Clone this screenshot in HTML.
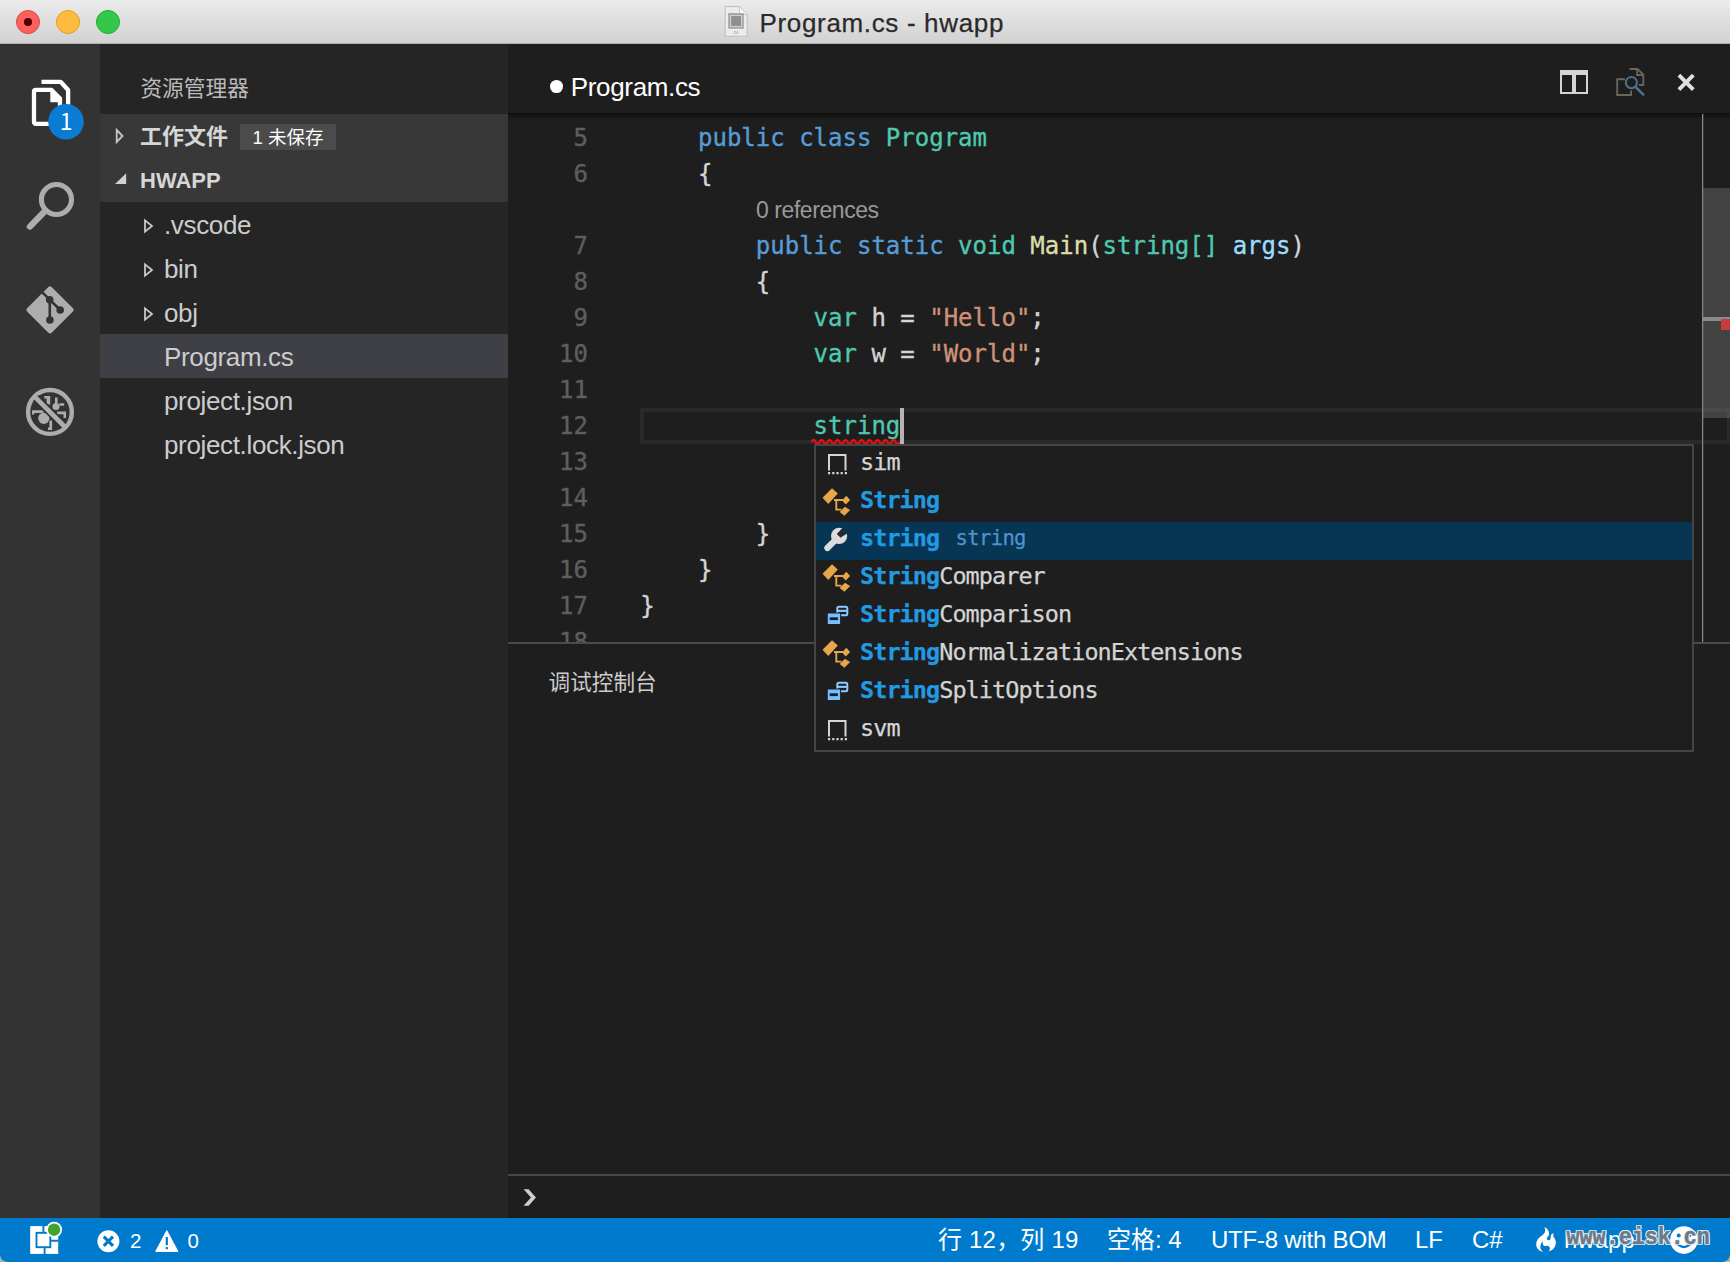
<!DOCTYPE html>
<html lang="zh-CN">
<head>
<meta charset="utf-8">
<title>Program.cs - hwapp</title>
<style>
*{box-sizing:border-box;margin:0;padding:0}
html,body{width:1730px;height:1262px;overflow:hidden;background:#1e1e1e}
body{position:relative;font-family:"Liberation Sans","Noto Sans CJK SC",sans-serif;color:#ccc}
.abs{position:absolute}
#titlebar{left:0;top:0;width:1730px;height:44px;background:linear-gradient(#ececec,#e4e3e4 30%,#d3d2d3);border-bottom:1px solid #b1b0b1}
.tl{position:absolute;top:10px;width:24px;height:24px;border-radius:50%}
#title{left:759.5px;top:1px;height:44px;line-height:45px;font-size:26px;color:#2a2a2a;white-space:nowrap;letter-spacing:0.66px;-webkit-text-stroke:0.25px}
#activity{left:0;top:44px;width:100px;height:1174px;background:#333333}
#sidebar{left:100px;top:44px;width:408px;height:1174px;background:#252526}
#editor{left:508px;top:44px;width:1222px;height:1174px;background:#1e1e1e}
#status{left:0;top:1218px;width:1730px;height:44px;background:#007acc;color:#fff;font-size:24px}
.sbtitle{left:140.4px;top:71.5px;font-size:21.7px;line-height:34px;color:#bbbbbb;white-space:nowrap}
.sechdr{left:100px;width:408px;height:44px;background:#383838}
.sectxt{font-size:22px;font-weight:bold;color:#d6d6d6;line-height:44px;white-space:nowrap}
.row{left:100px;width:408px;height:44px;line-height:46px;font-size:26px;color:#cccccc;white-space:nowrap;letter-spacing:-0.35px}
.row span{position:absolute;left:64px}
.code{font-family:"DejaVu Sans Mono","Liberation Mono",monospace;font-size:24px;white-space:pre;color:#d4d4d4;-webkit-text-stroke:0.35px}
.ln{left:508px;width:80px;text-align:right;height:36px;line-height:38px;color:#5e5e5e}
.cl{left:641px;height:36px;line-height:38px}
.k{color:#569cd6}.t{color:#4ec9b0}.s{color:#ce9178}.f{color:#dcdcaa}.v{color:#9cdcfe}
.sg{left:816px;width:876px;height:38px;line-height:32.6px;font-family:"DejaVu Sans Mono","Liberation Mono",monospace;font-size:23.5px;letter-spacing:-0.95px;white-space:pre;color:#d4d4d4;-webkit-text-stroke:0.25px}
.sg b{color:#219ae4;font-weight:bold}
.sg span.lbl{position:absolute;left:44px;top:0}
.st{top:0;height:44px;line-height:44px;white-space:nowrap}
</style>
</head>
<body>
<!-- title bar -->
<div id="titlebar" class="abs">
  <div class="tl" style="left:16px;background:#fc615d;border:1px solid #e2463f"></div>
  <div class="abs" style="left:24px;top:18px;width:8px;height:8px;border-radius:50%;background:#4d0000"></div>
  <div class="tl" style="left:56px;background:#fdbc40;border:1px solid #dfa023"></div>
  <div class="tl" style="left:96px;background:#34c84a;border:1px solid #1dad2c"></div>
</div>
<svg class="abs" style="left:720px;top:2px" width="32" height="40" viewBox="720 2 32 40">
  <path d="M725.2 6.6H739.5L747.2 14.6V36.2H725.2Z" fill="#ececec" stroke="#bdbdbd" stroke-width="1"/>
  <path d="M739.5 6.6V14.6H747.2Z" fill="#f8f8f8" stroke="#c4c4c4" stroke-width=".8"/>
  <rect x="728.2" y="13.1" width="15.6" height="15.6" fill="#a3a3a3"/>
  <rect x="730.6" y="15.6" width="11" height="10.8" fill="#8f8f8f" stroke="#d6d6d6" stroke-width="1"/>
  <text x="736" y="33.6" text-anchor="middle" style="font-family:'Liberation Sans',sans-serif;font-size:3.6px;font-weight:bold" fill="#9a9a9a">C#</text>
</svg>
<div id="title" class="abs">Program.cs - hwapp</div>

<div id="activity" class="abs"></div>
<div id="sidebar" class="abs"></div>
<div id="editor" class="abs"></div>

<!-- activity bar icons (page coords) -->
<svg class="abs" style="left:0;top:44px" width="100" height="420" viewBox="0 44 100 420">
  <!-- explorer -->
  <g fill="none" stroke="#ffffff" stroke-width="4.3" stroke-linejoin="round">
    <path d="M41.5 81.8H60.6L68.1 90V110"/>
    <path d="M51.5 89.9H36Q34 89.9 34 91.9V121.8Q34 123.8 36 123.8H58Q60 123.8 60 121.8V98.5Z"/>
  </g>
  <path d="M50.3 89.9H53L60.5 97.5V102.3H50.3Z" fill="#ffffff"/>
  <circle cx="66" cy="121.7" r="17.8" fill="#0a7cd4"/>
  <text x="66.2" y="129.8" style="font-family:'Noto Sans CJK SC','Liberation Sans',sans-serif;font-size:23px" fill="#ffffff" text-anchor="middle">1</text>
  <!-- search -->
  <circle cx="56.45" cy="199.5" r="15.05" fill="none" stroke="#adadad" stroke-width="5.1"/>
  <path d="M45.3 210.7L29.9 226.6" stroke="#adadad" stroke-width="6.3" stroke-linecap="round"/>
  <!-- git -->
  <path d="M48.1 287.2Q50 285.3 51.9 287.2L72.7 308Q74.6 309.9 72.7 311.8L51.9 332.6Q50 334.5 48.1 332.6L27.3 311.8Q25.4 309.9 27.3 308Z" fill="#adadad"/>
  <g stroke="#333333" stroke-width="2.6" fill="#333333">
    <path d="M41.8 291.8L49.7 299.7L60.2 310M49.8 299.7V320" fill="none"/>
    <circle cx="49.7" cy="299.8" r="2.5"/><circle cx="60.2" cy="310" r="2.5"/><circle cx="49.9" cy="320" r="2.5"/>
  </g>
  <!-- debug (disabled bug) -->
  <defs><clipPath id="dbgclip"><circle cx="49.95" cy="411.95" r="20"/></clipPath></defs>
  <circle cx="49.95" cy="411.95" r="21.9" fill="none" stroke="#adadad" stroke-width="4.4"/>
  <g clip-path="url(#dbgclip)">
  <g fill="#adadad">
    <circle cx="43.8" cy="418.3" r="5.6"/>
    <circle cx="56" cy="406.4" r="3.5"/>
    <path d="M32 410.2H43.4V412.9H34.3V414.4H32Z"/>
    <path d="M49.4 420.5H52.1V430H48V427.6H49.4Z"/>
    <path d="M44.2 396H50.2V404.5H46.6V398.4H44.2Z"/>
    <path d="M55 397.6H57.6V403.5H55Z"/>
    <path d="M59.3 403.3H64.2V405.8H59.3Z"/>
    <path d="M57 411.6H66V418H63.5V414.2H57Z"/>
  </g>
  <path d="M30 392L70 432" stroke="#333333" stroke-width="8.2"/>
  </g>
  <path d="M34.4 396.4L65.5 427.5" stroke="#adadad" stroke-width="4.6"/>
</svg>

<!-- sidebar content -->
<div class="abs sbtitle">资源管理器</div>
<div class="abs sechdr" style="top:114px;height:88px"></div>
<div class="abs sectxt" style="left:140px;top:115px">工作文件</div>
<div class="abs" style="left:240px;top:124px;width:96px;height:26px;background:#4b4b4b;color:#fff;font-size:18.5px;line-height:28px;text-align:center;white-space:nowrap">1 未保存</div>
<div class="abs sectxt" style="left:140px;top:158.5px">HWAPP</div>

<!-- tree twisties -->
<svg class="abs" style="left:100px;top:114px" width="70" height="230" viewBox="100 114 70 230" fill="none" stroke="#c8c8c8" stroke-width="1.8" stroke-linejoin="miter">
  <path d="M116.7 130L122.5 136L116.7 142Z"/>
  <path d="M126.2 173.2V184.1H115Z" fill="#d0d0d0" stroke="none"/>
  <path d="M145 220.4L152 226L145 231.6Z"/>
  <path d="M145 264.4L152 270L145 275.6Z"/>
  <path d="M145 308.4L152 314L145 319.6Z"/>
</svg>
<div class="abs row" style="top:202px"><span>.vscode</span></div>
<div class="abs row" style="top:246px"><span>bin</span></div>
<div class="abs row" style="top:290px"><span>obj</span></div>
<div class="abs row" style="top:334px;background:#3f3f46"><span>Program.cs</span></div>
<div class="abs row" style="top:378px"><span>project.json</span></div>
<div class="abs row" style="top:422px"><span>project.lock.json</span></div>

<!-- editor header -->
<div class="abs" style="left:549.8px;top:80.4px;width:12.8px;height:12.8px;border-radius:50%;background:#ffffff"></div>
<div class="abs" style="left:570.8px;top:65px;font-size:26px;line-height:44px;color:#fff;white-space:nowrap;letter-spacing:-0.35px">Program.cs</div>

<!-- editor body -->
<div class="abs" style="left:508px;top:114px;width:1222px;height:528px;overflow:hidden" id="edbody">
<div class="abs" style="left:132px;top:294px;width:1090px;height:36px;border:4px solid #2a2a2a;border-right-width:3px"></div>
<div class="abs code ln" style="left:0;top:5px">5</div>
<div class="abs code cl" style="left:132.2px;top:5px">    <span class="k">public</span> <span class="k">class</span> <span class="t">Program</span></div>
<div class="abs code ln" style="left:0;top:41px">6</div>
<div class="abs code cl" style="left:132.2px;top:41px">    {</div>
<div class="abs" style="left:248px;top:77px;height:36px;line-height:39px;font-size:23px;color:#999999;white-space:nowrap;letter-spacing:-0.43px">0 references</div>
<div class="abs code ln" style="left:0;top:113px">7</div>
<div class="abs code cl" style="left:132.2px;top:113px">        <span class="k">public</span> <span class="k">static</span> <span class="t">void</span> <span class="f">Main</span>(<span class="t">string</span><span class="t">[]</span> <span class="v">args</span>)</div>
<div class="abs code ln" style="left:0;top:149px">8</div>
<div class="abs code cl" style="left:132.2px;top:149px">        {</div>
<div class="abs code ln" style="left:0;top:185px">9</div>
<div class="abs code cl" style="left:132.2px;top:185px">            <span class="t">var</span> h = <span class="s">"Hello"</span>;</div>
<div class="abs code ln" style="left:0;top:221px">10</div>
<div class="abs code cl" style="left:132.2px;top:221px">            <span class="t">var</span> w = <span class="s">"World"</span>;</div>
<div class="abs code ln" style="left:0;top:257px">11</div>
<div class="abs code ln" style="left:0;top:293px">12</div>
<div class="abs code cl" style="left:132.2px;top:293px">            <span class="t">string</span></div>
<div class="abs code ln" style="left:0;top:329px">13</div>
<div class="abs code ln" style="left:0;top:365px">14</div>
<div class="abs code ln" style="left:0;top:401px">15</div>
<div class="abs code cl" style="left:132.2px;top:401px">        }</div>
<div class="abs code ln" style="left:0;top:437px">16</div>
<div class="abs code cl" style="left:132.2px;top:437px">    }</div>
<div class="abs code ln" style="left:0;top:473px">17</div>
<div class="abs code cl" style="left:132.2px;top:473px">}</div>
<div class="abs code ln" style="left:0;top:509px">18</div>
<!-- cursor + squiggle (inside edbody coords) -->
<svg class="abs" style="left:300px;top:321px" width="100" height="12" viewBox="0 0 100 12"><path d="M3.6 7q2 -4.2 4 0 t4 0 t4 0 t4 0 t4 0 t4 0 t4 0 t4 0 t4 0 t4 0 t4 0 t4 0 t4 0 t4 0 t4 0 t4 0 t4 0 t4 0 t4 0 t4 0 t4 0 t4 0" fill="none" stroke="#f00c0c" stroke-width="2.3"/></svg>
<div class="abs" style="left:392px;top:294px;width:4px;height:36px;background:#b4b4b4"></div>
</div>

<!-- editor chrome: header shadow, ruler, scrollbar -->
<div class="abs" style="left:508px;top:113px;width:1222px;height:7px;background:linear-gradient(rgba(0,0,0,.5),rgba(0,0,0,0))"></div>
<div class="abs" style="left:1702px;top:114px;width:1px;height:528px;background:#858585"></div>
<div class="abs" style="left:1703px;top:114px;width:1px;height:528px;background:#3a3a3a"></div>
<div class="abs" style="left:1703px;top:188px;width:27px;height:230px;background:rgba(121,121,121,.4)"></div>
<div class="abs" style="left:1703px;top:317px;width:27px;height:4px;background:#8a8a8a"></div>
<div class="abs" style="left:1721px;top:319px;width:9px;height:11px;background:#c93a3a"></div>

<!-- panel -->
<div class="abs" style="left:508px;top:642px;width:1222px;height:576px;background:#1e1e1e;border-top:2px solid #4b4b4b"></div>
<div class="abs" style="left:548.6px;top:665px;font-size:21.6px;line-height:36px;color:#cccccc;white-space:nowrap">调试控制台</div>
<div class="abs" style="left:508px;top:1174px;width:1222px;height:2px;background:#484848"></div>
<svg class="abs" style="left:520px;top:1186px" width="20" height="24" viewBox="0 0 20 24"><path d="M3.6 3.2H8.6L16 11.4L8.6 19.8H3.6L11 11.4Z" fill="#d0d0d0"/></svg>

<!-- suggest widget -->
<div class="abs" style="left:814px;top:444px;width:880px;height:308px;background:#1e1e1e;border:2px solid #454545"></div>
<div class="abs sg" style="top:446px"><svg class="abs" style="left:0;top:0" width="44" height="38" viewBox="0 0 44 38"><path d="M13 24.5V9H29.5V24.5" fill="none" stroke="#d4d4d4" stroke-width="2"/><path d="M12 27.2H31" fill="none" stroke="#d4d4d4" stroke-width="2.2" stroke-dasharray="2.2 2"/></svg><span class="lbl">sim</span></div>
<div class="abs sg" style="top:484px"><svg class="abs" style="left:0;top:0" width="44" height="38" viewBox="0 0 44 38"><g fill="#e8a64a"><path d="M16 4.2L21.8 9.4L12.3 19.9L6.5 13.7Z"/><path d="M30.3 11.8L34.1 16.1L29.8 20.4L26 16.5Z"/><path d="M28.9 22.7L34.1 26L28.4 31.8L23.7 28Z"/></g><path d="M18 16H27M20.3 16V25.6H25.5" fill="none" stroke="#e8a64a" stroke-width="1.9"/></svg><span class="lbl"><b>String</b></span></div>
<div class="abs sg" style="top:522px;background:#073655"><svg class="abs" style="left:0;top:0" width="44" height="38" viewBox="0 0 44 38"><path d="M11.4 26L19.5 17.9" stroke="#dcdcdc" stroke-width="6.2" stroke-linecap="round" fill="none"/><circle cx="23.1" cy="13.9" r="8.1" fill="#dcdcdc"/><path d="M21 12L26.6 6L33 8L31.5 11.2L24.6 15.6Z" fill="#073655"/><path d="M21 12L26 6.7L30.3 10.2L24.6 15.6Z" fill="#2b2b2e"/></svg><span class="lbl"><b>string</b><span style="font-size:20.5px;letter-spacing:-0.64px;font-weight:normal;color:#5193cc;position:absolute;left:95.6px;top:0">string</span></span></div>
<div class="abs sg" style="top:560px"><svg class="abs" style="left:0;top:0" width="44" height="38" viewBox="0 0 44 38"><g fill="#e8a64a"><path d="M16 4.2L21.8 9.4L12.3 19.9L6.5 13.7Z"/><path d="M30.3 11.8L34.1 16.1L29.8 20.4L26 16.5Z"/><path d="M28.9 22.7L34.1 26L28.4 31.8L23.7 28Z"/></g><path d="M18 16H27M20.3 16V25.6H25.5" fill="none" stroke="#e8a64a" stroke-width="1.9"/></svg><span class="lbl"><b>String</b>Comparer</span></div>
<div class="abs sg" style="top:598px"><svg class="abs" style="left:0;top:0" width="44" height="38" viewBox="0 0 44 38"><rect x="21.3" y="8.7" width="10" height="8.5" fill="none" stroke="#8ecaff" stroke-width="2" rx="1.5"/><rect x="22" y="11.8" width="8.6" height="2.1" fill="#8ecaff"/><rect x="10.8" y="14.5" width="14.3" height="12.5" fill="#1e1e1e"/><rect x="11.8" y="15.5" width="12.3" height="10.5" fill="#75beff"/><rect x="13.7" y="19.3" width="8.2" height="2.8" fill="#10202f"/></svg><span class="lbl"><b>String</b>Comparison</span></div>
<div class="abs sg" style="top:636px"><svg class="abs" style="left:0;top:0" width="44" height="38" viewBox="0 0 44 38"><g fill="#e8a64a"><path d="M16 4.2L21.8 9.4L12.3 19.9L6.5 13.7Z"/><path d="M30.3 11.8L34.1 16.1L29.8 20.4L26 16.5Z"/><path d="M28.9 22.7L34.1 26L28.4 31.8L23.7 28Z"/></g><path d="M18 16H27M20.3 16V25.6H25.5" fill="none" stroke="#e8a64a" stroke-width="1.9"/></svg><span class="lbl"><b>String</b>NormalizationExtensions</span></div>
<div class="abs sg" style="top:674px"><svg class="abs" style="left:0;top:0" width="44" height="38" viewBox="0 0 44 38"><rect x="21.3" y="8.7" width="10" height="8.5" fill="none" stroke="#8ecaff" stroke-width="2" rx="1.5"/><rect x="22" y="11.8" width="8.6" height="2.1" fill="#8ecaff"/><rect x="10.8" y="14.5" width="14.3" height="12.5" fill="#1e1e1e"/><rect x="11.8" y="15.5" width="12.3" height="10.5" fill="#75beff"/><rect x="13.7" y="19.3" width="8.2" height="2.8" fill="#10202f"/></svg><span class="lbl"><b>String</b>SplitOptions</span></div>
<div class="abs sg" style="top:712px"><svg class="abs" style="left:0;top:0" width="44" height="38" viewBox="0 0 44 38"><path d="M13 24.5V9H29.5V24.5" fill="none" stroke="#d4d4d4" stroke-width="2"/><path d="M12 27.2H31" fill="none" stroke="#d4d4d4" stroke-width="2.2" stroke-dasharray="2.2 2"/></svg><span class="lbl">svm</span></div>

<!-- editor header actions -->
<svg class="abs" style="left:1550px;top:60px" width="160" height="44" viewBox="1550 60 160 44">
  <path d="M1560 70H1588V94H1560ZM1562 75V92H1572V75ZM1576 75V92H1586V75Z" fill="#d4d4d4" fill-rule="evenodd"/>
  <g fill="none" stroke="#6a655f" stroke-width="1.9">
    <path d="M1629.5 69H1637.6L1643.3 74.7V85H1639"/>
    <path d="M1637.2 69.2V75H1643"/>
    <path d="M1625 79.2H1617.2V95H1631V90.5"/>
  </g>
  <circle cx="1631.4" cy="82.6" r="5.6" fill="none" stroke="#4d708f" stroke-width="2"/>
  <path d="M1635.4 86.8L1643.3 94.6" stroke="#4d708f" stroke-width="2.6" stroke-linecap="round"/>
  <path d="M1678.9 75.2L1693.3 89.6M1693.3 75.2L1678.9 89.6" stroke="#e0e0e0" stroke-width="3.9"/>
</svg>

<!-- status bar -->
<div id="status" class="abs">
<svg class="abs" style="left:0;top:0" width="1730" height="44" viewBox="0 1218 1730 44">
  <rect x="30.2" y="1226.1" width="28" height="27.8" fill="#ffffff"/>
  <g fill="none" stroke="#007acc" stroke-width="1.9">
    <rect x="36.5" y="1232.8" width="13.8" height="14.4"/>
    <path d="M44.6 1247.2V1254M50.3 1240.8H58.4M43.4 1226V1232.8"/>
  </g>
  <circle cx="54.1" cy="1229.7" r="7.9" fill="#ffffff"/>
  <circle cx="54.1" cy="1229.7" r="6.2" fill="#43a32b"/>
  <circle cx="108.4" cy="1241.2" r="11" fill="#ffffff"/>
  <path d="M103.8 1236.6L113 1245.8M113 1236.6L103.8 1245.8" stroke="#007acc" stroke-width="3.1"/>
  <path d="M166.8 1230.6L177.9 1251.4H155.7Z" fill="#ffffff" stroke="#ffffff" stroke-width="1" stroke-linejoin="round"/>
  <path d="M166.8 1237V1245.2M166.8 1247V1249.2" stroke="#007acc" stroke-width="2.2"/>
  <path transform="translate(1536.2 1226.4) scale(1.64)" d="M5.05.31c.81 2.17.41 3.38-.52 4.31C3.55 5.67 1.98 6.45.9 7.98c-1.45 2.05-1.7 6.53 3.53 7.7-2.2-1.16-2.67-4.52-.3-6.61-.61 2.03.53 3.33 1.94 2.86 1.39-.47 2.3.53 2.27 1.67-.02.78-.31 1.44-1.13 1.81 3.42-.59 4.78-3.42 4.78-5.56 0-2.84-2.53-3.22-1.25-5.61-1.52.13-2.03 1.13-1.89 2.75.09 1.08-1.02 1.8-1.86 1.33-.67-.41-.66-1.19-.06-1.78C8.18 5.31 8.68 2.45 5.05.32L5.03.3l.2.01z" fill="#ffffff"/>
  <circle cx="1683.9" cy="1240.1" r="13.8" fill="#ffffff"/>
  <circle cx="1678.7" cy="1235.6" r="2" fill="#007acc"/>
  <circle cx="1689.1" cy="1235.6" r="2" fill="#007acc"/>
  <path d="M1675.8 1242.6Q1683.9 1251.5 1692 1242.6" fill="none" stroke="#007acc" stroke-width="2.2" stroke-linecap="round"/>
</svg>
  <div class="abs st" style="left:130px;font-size:20.5px;line-height:45px">2</div>
  <div class="abs st" style="left:187.6px;font-size:20.5px;line-height:45px">0</div>
  <div class="abs st" style="left:938px;letter-spacing:0.2px">行 12，列 19</div>
  <div class="abs st" style="left:1107px">空格: 4</div>
  <div class="abs st" style="left:1211px;letter-spacing:-0.22px">UTF-8 with BOM</div>
  <div class="abs st" style="left:1415px">LF</div>
  <div class="abs st" style="left:1472px">C#</div>
  <div class="abs st" style="left:1564px">hwapp</div>
<div class="abs" style="left:1566.6px;top:3.4px;height:36px;line-height:36px;font-family:'Liberation Mono',monospace;font-weight:bold;font-size:21.7px;color:#6c7986;white-space:nowrap;transform:scaleY(1.1);transform-origin:0 26px;-webkit-text-stroke:0.45px #6c7986;text-shadow:1px 0 0 #e8f1f8,-1px 0 0 #e8f1f8,0 1px 0 #e8f1f8,0 -1px 0 #e8f1f8,1px 1px 0 #e8f1f8,-1px -1px 0 #e8f1f8,1px -1px 0 #e8f1f8,-1px 1px 0 #e8f1f8">www.eisk.cn</div>
</div>
<!-- window rounded corners -->
<svg class="abs" style="left:0;top:1254px" width="8" height="8" viewBox="0 0 8 8"><path d="M0 8V1Q1.2 6.8 7 8Z" fill="#a9adb0"/></svg>
<svg class="abs" style="left:1722px;top:1254px" width="8" height="8" viewBox="0 0 8 8"><path d="M8 8V1Q6.8 6.8 1 8Z" fill="#a9adb0"/></svg>
</body>
</html>
